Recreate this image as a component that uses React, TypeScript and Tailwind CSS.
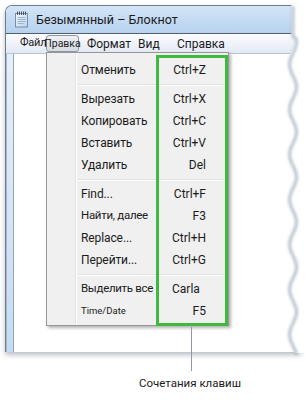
const font = { fontFamily: 'Roboto, "Noto Sans", sans-serif' };

type Row =
  | { kind: 'item'; label: string; key: string; small?: boolean; keyLeft?: boolean; narrow?: boolean }
  | { kind: 'sep' };

const rows: Row[] = [
  { kind: 'item', label: 'Отменить', key: 'Ctrl+Z' },
  { kind: 'sep' },
  { kind: 'item', label: 'Вырезать', key: 'Ctrl+X' },
  { kind: 'item', label: 'Копировать', key: 'Ctrl+C' },
  { kind: 'item', label: 'Вставить', key: 'Ctrl+V' },
  { kind: 'item', label: 'Удалить', key: 'Del' },
  { kind: 'sep' },
  { kind: 'item', label: 'Find...', key: 'Ctrl+F' },
  { kind: 'item', label: 'Найти, далее', key: 'F3', narrow: true },
  { kind: 'item', label: 'Replace...', key: 'Ctrl+H' },
  { kind: 'item', label: 'Перейти...', key: 'Ctrl+G' },
  { kind: 'sep' },
  { kind: 'item', label: 'Выделить все', key: 'Carla', keyLeft: true, narrow: true },
  { kind: 'item', label: 'Time/Date', key: 'F5', small: true },
];

// torn right edge of the window, in overlay coordinates (overlay starts at x=270)
function waveX(y: number) {
  if (y < 36) return 21.5;
  return 21.5 + 3.4 * Math.cos((2 * Math.PI * (y - 220)) / 45);
}
const wavePts: string[] = [];
for (let y = 4; y <= 353; y += 1) wavePts.push(`${waveX(y).toFixed(1)},${y}`);
const waveLine = 'M' + wavePts.join(' L');
const waveFill = waveLine + ' L40,353 L40,4 Z';

function NotepadIcon() {
  return (
    <svg width="16" height="17" viewBox="0 0 16 17">
      <defs>
        <linearGradient id="np" x1="0" y1="0" x2="1" y2="1">
          <stop offset="0" stopColor="#f4f9ff" />
          <stop offset="1" stopColor="#b9d3ee" />
        </linearGradient>
      </defs>
      <rect x="1.5" y="2.5" width="12" height="13.5" fill="url(#np)" stroke="#7a8ea6" />
      <path d="M3.5 6.5h8M3.5 8.5h8M3.5 10.5h8M3.5 12.5h6" stroke="#9fb4cc" strokeWidth="1" />
      {[3, 5, 7, 9, 11].map((x) => (
        <rect key={x} x={x} y="0.5" width="1" height="3.5" fill="#4a5560" />
      ))}
    </svg>
  );
}

function EditMenu() {
  return (
    <div className="absolute left-[46px] top-[52px] w-[183px] h-[274px] bg-[#f0f0f0] border border-[#979797] shadow-[2px_2px_3px_rgba(0,0,0,0.3)] pt-[6px]">
      <div className="absolute left-[28px] top-0 bottom-0 w-[2px] border-l border-[#e2e3e3] bg-white" />
      <div className="relative flex flex-col">
        {rows.map((row, i) =>
          row.kind === 'sep' ? (
            <div key={i} className="h-[7px] flex flex-col justify-center pl-[31px] pr-[4px]">
              <div className="h-[2px] border-t border-[#e0e0e0] bg-white" />
            </div>
          ) : (
            <div key={i} className="h-[22px] flex items-center pl-[34px] pr-[22px] text-[12px] text-[#1b1b1b] whitespace-nowrap">
              <span className={row.small ? 'text-[9.5px]' : row.narrow ? 'text-[11.5px] tracking-[-0.3px]' : 'tracking-[-0.1px]'}>
                {row.label}
              </span>
              {row.keyLeft ? (
                <span className="absolute left-[125px]">{row.key}</span>
              ) : (
                <span className="ml-auto">{row.key}</span>
              )}
            </div>
          ),
        )}
      </div>
    </div>
  );
}

export default function App() {
  return (
    <div className="relative w-[307px] h-[400px] bg-white overflow-hidden" style={font}>
      <div className="ml-[5px] mt-[5px] w-[296px] h-[347px] flex flex-col bg-white border-l border-t border-[#6e7d90] rounded-tl-[7px] overflow-hidden shadow-[0_3px_5px_rgba(60,70,90,0.35)]">
        <div className="h-[28px] flex items-center pl-[8px] bg-gradient-to-b from-[#d3e5f7] to-[#b7d1ee] border-b border-[#4f5e70]">
          <NotepadIcon />
          <span className="ml-[6px] text-[12.5px] text-[#1a1a1a] pt-[1px] whitespace-nowrap">Безымянный – Блокнот</span>
        </div>
        <div className="h-[20px] flex items-center text-[12px] text-[#1b1b1b] bg-gradient-to-b from-[#fbfcfe] to-[#e3e9f4] border-b border-[#b9c5d6] whitespace-nowrap">
          <span className="ml-[14px] w-[26px] shrink-0 text-[11px] tracking-[-0.2px]">Файл</span>
          <span className="h-[17px] w-[33px] shrink-0 flex items-center justify-center rounded-[3px] border border-[#8c98a8] bg-gradient-to-b from-[#eef1f5] to-[#d7dce3] text-[10.5px]">
            Правка
          </span>
          <span className="ml-[8px] w-[51px]">Формат</span>
          <span className="w-[39px]">Вид</span>
          <span>Справка</span>
        </div>
        <div className="flex-1 flex">
          <div className="w-[8px] bg-gradient-to-b from-[#e6eff9] to-[#c6dbf3] border-l border-[#a7b6c8] border-r border-r-[#8fa4bd]" />
          <div className="flex-1 bg-white" />
        </div>
      </div>

      <svg className="absolute left-[270px] top-0" width="40" height="360">
        <defs>
          <filter id="blur" x="-50%" y="-5%" width="200%" height="110%">
            <feGaussianBlur stdDeviation="1.6" />
          </filter>
        </defs>
        <path d={waveFill} fill="#ffffff" />
        <path d={waveLine} fill="none" stroke="#a9b4c4" strokeWidth="2.5" filter="url(#blur)" transform="translate(1.5,2)" />
      </svg>

      <EditMenu />
      <div className="absolute left-[156px] top-[55px] w-[72px] h-[271px] border-[3px] border-[#3fba3f]" />
      <div className="absolute left-[191px] top-[327px] w-px h-[44px] bg-[#8d99a8]" />

      <div className="ml-[130px] mt-[23px] w-[120px] text-center text-[11.5px] text-[#1b1b1b] whitespace-nowrap">
        Сочетания клавиш
      </div>
    </div>
  );
}
